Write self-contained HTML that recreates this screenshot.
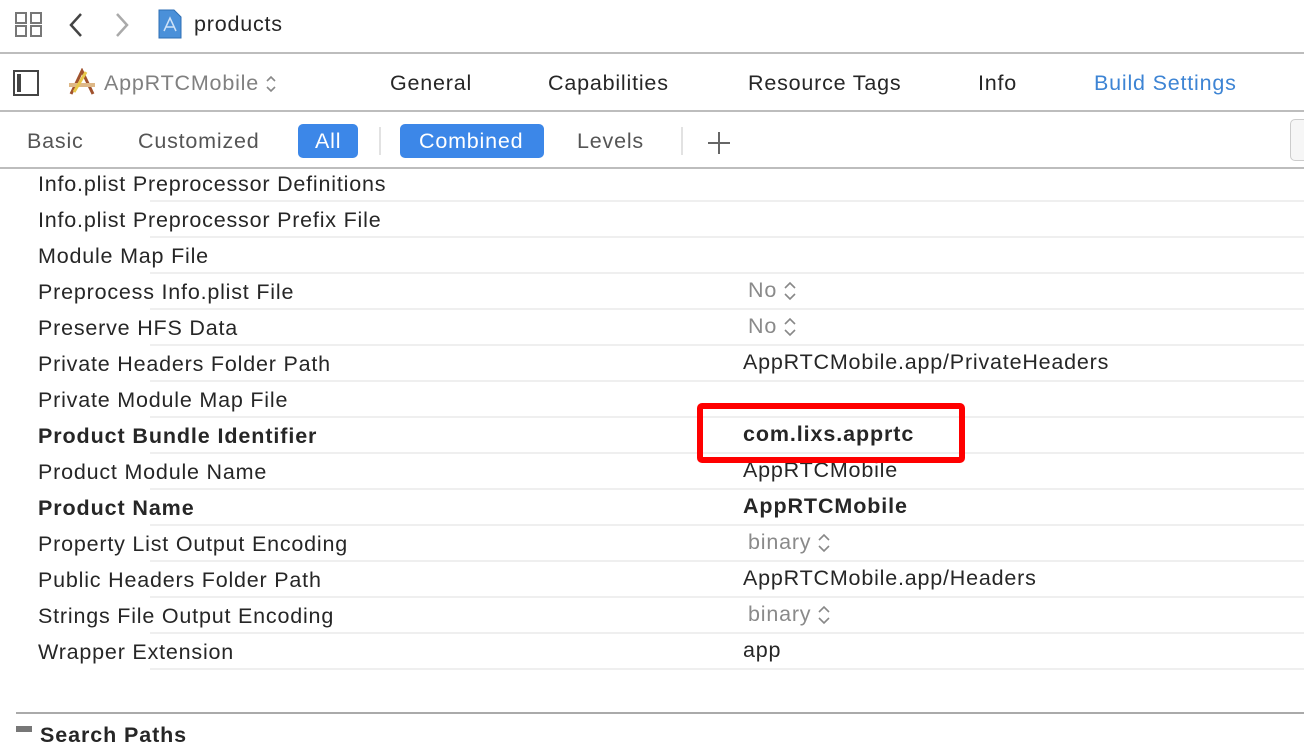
<!DOCTYPE html>
<html><head><meta charset="utf-8"><style>
*{margin:0;padding:0;box-sizing:border-box}
body{width:1304px;height:730px;overflow:hidden;background:#fff;font-family:"Liberation Sans",sans-serif;color:#262626;position:relative;letter-spacing:0.8px}
.a{position:absolute;white-space:nowrap}
.hl{position:absolute;left:0;width:1304px;height:2px;background:#bdbdbd}
.t{font-size:21.5px}
.row{position:absolute;left:0;width:1304px;height:36px}
.row .n{position:absolute;left:38px;top:6px;font-size:21.5px;color:#262626}
.row .v{position:absolute;left:743px;top:4px;font-size:21.5px;color:#262626}
.row .g{left:748px;color:#8a8a8a}
.row .sep{position:absolute;left:150px;right:0;bottom:0;height:2px;background:#efefef}
.b{font-weight:bold;letter-spacing:0.9px}
.st{display:inline-block;vertical-align:middle;margin-left:6px}
</style></head><body>
<svg class="a" style="left:14px;top:11px" width="30" height="28" viewBox="0 0 30 28" fill="none" stroke="#777" stroke-width="2"><rect x="2" y="2" width="10" height="10"/><rect x="17" y="2" width="10" height="10"/><rect x="2" y="15" width="10" height="10"/><rect x="17" y="15" width="10" height="10"/></svg>
<svg class="a" style="left:68px;top:12px" width="16" height="26"><path d="M13 2L3 13l10 11" fill="none" stroke="#444" stroke-width="2.5"/></svg>
<svg class="a" style="left:114px;top:12px" width="16" height="26"><path d="M3 2l10 11L3 24" fill="none" stroke="#aaa" stroke-width="2.5"/></svg>
<svg class="a" style="left:158px;top:9px" width="24" height="30"><path d="M1 1h15l7 7v21H1z" fill="#4a90d9" stroke="#2f6fb5"/><path d="M6 22l6-13 6 13M8 18h8" stroke="#cfe3f8" stroke-width="1.5" fill="none"/></svg>
<div class="a t" style="left:194px;top:12px;color:#262626">products</div>
<div class="hl" style="top:52px"></div>
<svg class="a" style="left:13px;top:70px" width="26" height="26"><rect x="1" y="1" width="24" height="24" fill="none" stroke="#444" stroke-width="2"/><rect x="4" y="4" width="4" height="18" fill="#444"/></svg>
<svg class="a" style="left:68px;top:68px" width="28" height="28"><path d="M3 26L14 3l11 23" stroke="#a0522d" stroke-width="3" fill="none"/><rect x="1" y="15" width="26" height="4" fill="#deb887"/><path d="M6 24L18 4" stroke="#e8c84a" stroke-width="3"/></svg>
<div class="a t" style="left:104px;top:71px;color:#808080">AppRTCMobile<svg class="st" width="12" height="20"><path d="M2 7l4-4 4 4M2 13l4 4 4-4" fill="none" stroke="#888" stroke-width="1.6"/></svg></div>
<div class="a t" style="left:390px;top:71px">General</div>
<div class="a t" style="left:548px;top:71px">Capabilities</div>
<div class="a t" style="left:748px;top:71px">Resource Tags</div>
<div class="a t" style="left:978px;top:71px">Info</div>
<div class="a t" style="left:1094px;top:71px;color:#3d84d4">Build Settings</div>
<div class="hl" style="top:110px"></div>
<div class="a t" style="left:27px;top:129px;color:#555">Basic</div>
<div class="a t" style="left:138px;top:129px;color:#555">Customized</div>
<div class="a" style="left:298px;top:124px;width:60px;height:34px;background:#3c87e8;border-radius:5px"></div>
<div class="a t" style="left:315px;top:129px;color:#fff">All</div>
<div class="a" style="left:379px;top:127px;width:2px;height:28px;background:#e2e2e2"></div>
<div class="a" style="left:400px;top:124px;width:144px;height:34px;background:#3c87e8;border-radius:5px"></div>
<div class="a t" style="left:419px;top:129px;color:#fff">Combined</div>
<div class="a t" style="left:577px;top:129px;color:#555">Levels</div>
<div class="a" style="left:681px;top:127px;width:2px;height:28px;background:#e2e2e2"></div>
<svg class="a" style="left:707px;top:131px" width="24" height="24"><path d="M12 1v22M1 12h22" stroke="#666" stroke-width="2"/></svg>
<div class="a" style="left:1290px;top:119px;width:30px;height:42px;border:1px solid #ccc;border-radius:5px;background:#f6f6f6"></div>
<div class="hl" style="top:167px"></div>

<div class="row" style="top:166px"><div class="n">Info.plist Preprocessor Definitions</div><div class="sep"></div></div>
<div class="row" style="top:202px"><div class="n">Info.plist Preprocessor Prefix File</div><div class="sep"></div></div>
<div class="row" style="top:238px"><div class="n">Module Map File</div><div class="sep"></div></div>
<div class="row" style="top:274px"><div class="n">Preprocess Info.plist File</div><div class="v g">No<svg class="st" width="14" height="22"><path d="M2 8l5-5 5 5M2 14l5 5 5-5" fill="none" stroke="#888" stroke-width="1.6"/></svg></div><div class="sep"></div></div>
<div class="row" style="top:310px"><div class="n">Preserve HFS Data</div><div class="v g">No<svg class="st" width="14" height="22"><path d="M2 8l5-5 5 5M2 14l5 5 5-5" fill="none" stroke="#888" stroke-width="1.6"/></svg></div><div class="sep"></div></div>
<div class="row" style="top:346px"><div class="n">Private Headers Folder Path</div><div class="v">AppRTCMobile.app/PrivateHeaders</div><div class="sep"></div></div>
<div class="row" style="top:382px"><div class="n">Private Module Map File</div><div class="sep"></div></div>
<div class="row" style="top:418px"><div class="n b">Product Bundle Identifier</div><div class="v b">com.lixs.apprtc</div><div class="sep"></div></div>
<div class="row" style="top:454px"><div class="n">Product Module Name</div><div class="v">AppRTCMobile</div><div class="sep"></div></div>
<div class="row" style="top:490px"><div class="n b">Product Name</div><div class="v b">AppRTCMobile</div><div class="sep"></div></div>
<div class="row" style="top:526px"><div class="n">Property List Output Encoding</div><div class="v g">binary<svg class="st" width="14" height="22"><path d="M2 8l5-5 5 5M2 14l5 5 5-5" fill="none" stroke="#888" stroke-width="1.6"/></svg></div><div class="sep"></div></div>
<div class="row" style="top:562px"><div class="n">Public Headers Folder Path</div><div class="v">AppRTCMobile.app/Headers</div><div class="sep"></div></div>
<div class="row" style="top:598px"><div class="n">Strings File Output Encoding</div><div class="v g">binary<svg class="st" width="14" height="22"><path d="M2 8l5-5 5 5M2 14l5 5 5-5" fill="none" stroke="#888" stroke-width="1.6"/></svg></div><div class="sep"></div></div>
<div class="row" style="top:634px"><div class="n">Wrapper Extension</div><div class="v">app</div><div class="sep"></div></div>

<div class="a" style="left:697px;top:403px;width:268px;height:60px;border:6px solid #f00;border-radius:5px"></div>

<div class="a" style="left:16px;top:712px;width:1288px;height:2px;background:#aaa"></div>
<div class="a" style="left:16px;top:726px;width:16px;height:6px;background:#777"></div>
<div class="a b" style="left:40px;top:723px;font-size:21.5px">Search Paths</div>
</body></html>
